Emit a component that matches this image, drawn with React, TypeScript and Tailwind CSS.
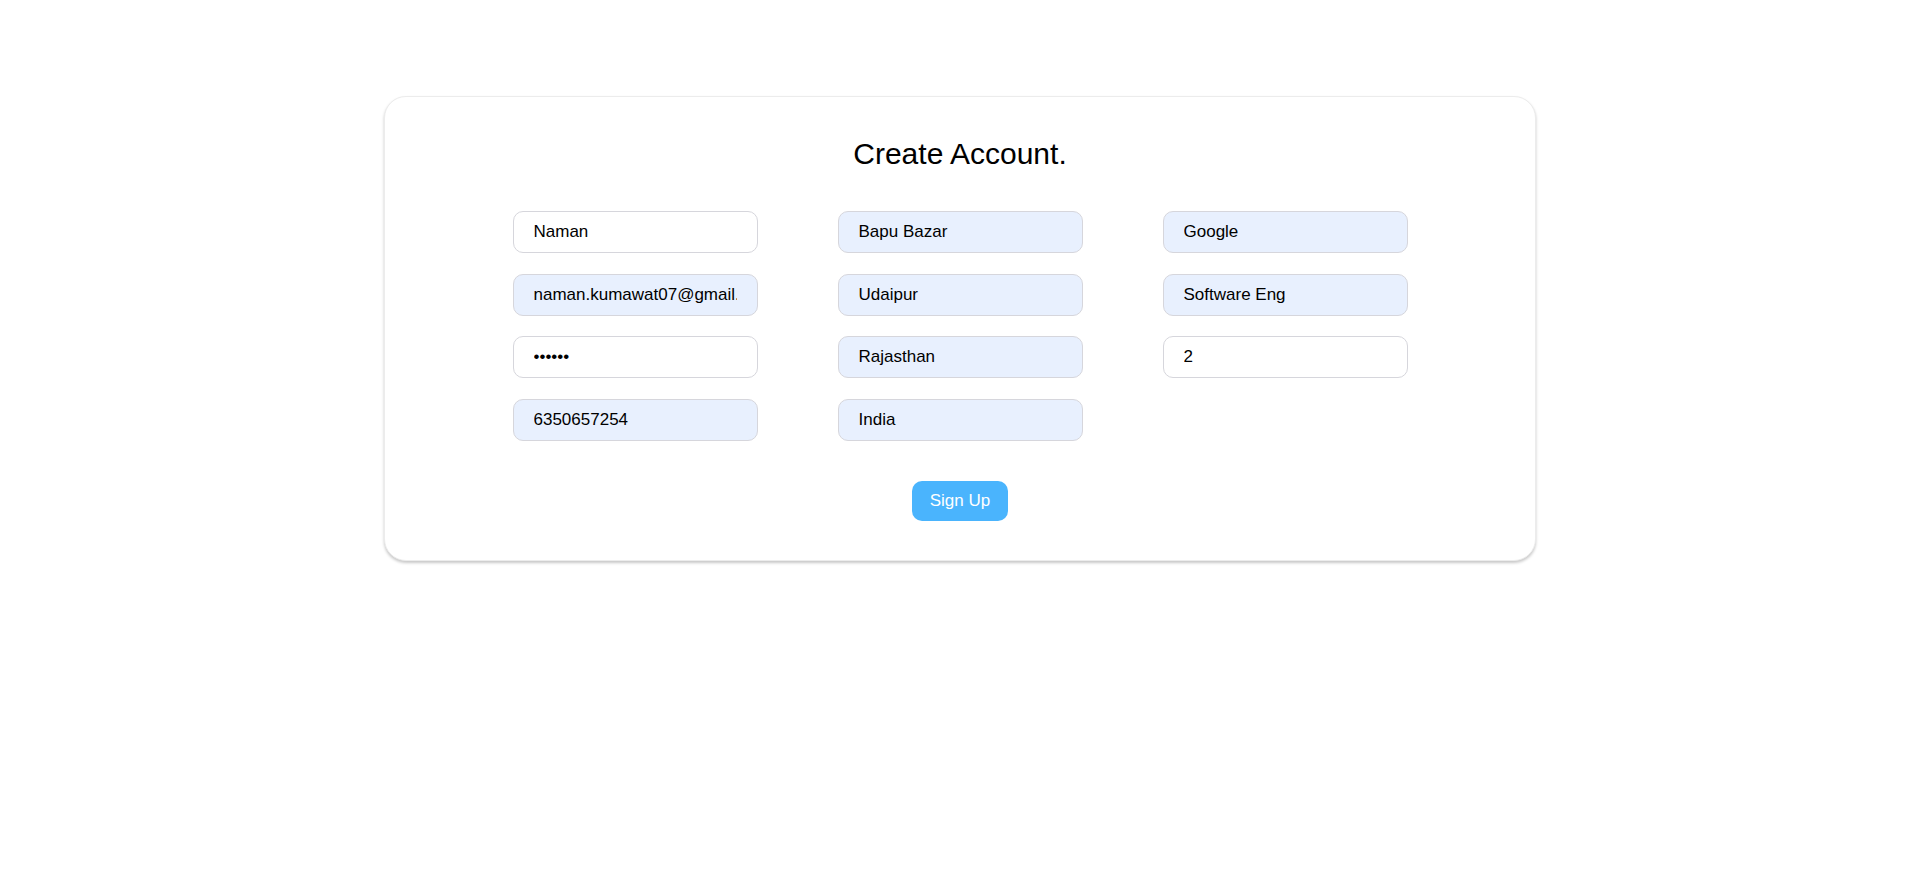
import React from "react";

type Field = { value: string; filled: boolean; type?: string };

const col1: Field[] = [
  { value: "Naman", filled: false },
  { value: "naman.kumawat07@gmail.com", filled: true },
  { value: "123456", filled: false, type: "password" },
  { value: "6350657254", filled: true },
];
const col2: Field[] = [
  { value: "Bapu Bazar", filled: true },
  { value: "Udaipur", filled: true },
  { value: "Rajasthan", filled: true },
  { value: "India", filled: true },
];
const col3: Field[] = [
  { value: "Google", filled: true },
  { value: "Software Eng", filled: true },
  { value: "2", filled: false },
];

function Input({ f }: { f: Field }) {
  return (
    <input
      readOnly
      type={f.type ?? "text"}
      value={f.value}
      className={
        "h-[42px] w-[245px] rounded-[10px] border border-[#d6d6dc] px-[20px] text-[17px] text-black outline-none " +
        (f.filled ? "bg-[#e8f0fe]" : "bg-white")
      }
      style={{ fontFamily: '"Liberation Sans", Arial, sans-serif' }}
    />
  );
}

export default function App() {
  return (
    <div
      className="min-h-[888px] w-full bg-white pt-[96px]"
      style={{ fontFamily: '"Liberation Sans", Arial, sans-serif' }}
    >
      <div className="mx-auto flex w-[60%] flex-col items-center rounded-[22px] border border-[#ececec] bg-white pt-[39px] pb-[39px] shadow-[0_2px_3px_rgba(0,0,0,0.22)]">
        <h1 className="text-[30px] leading-[36px] font-normal text-black">Create Account.</h1>
        <div className="mt-[39px] grid grid-cols-[245px_245px_245px] gap-x-[80px]">
          {[col1, col2, col3].map((col, i) => (
            <div key={i} className="flex flex-col gap-[20.67px]">
              {col.map((f, j) => (
                <Input key={j} f={f} />
              ))}
            </div>
          ))}
        </div>
        <button className="mt-[40px] h-[40px] w-[96px] rounded-[10px] bg-[#4ab4fd] text-[17px] text-white">
          Sign Up
        </button>
      </div>
    </div>
  );
}
